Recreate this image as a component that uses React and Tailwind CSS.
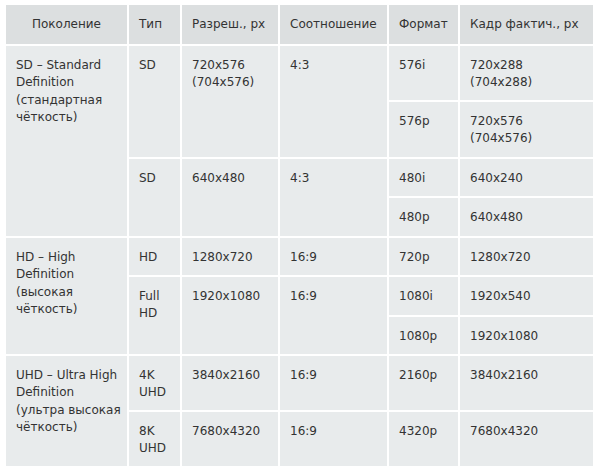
import React from 'react'

const head = 'bg-[#dcdfe0] px-[10px] py-0 h-[39px] align-middle font-normal'
const td = 'bg-[#e8ebec] px-[10px] pt-[11px] pb-[8px] align-top text-left'

function Lines({ children }) {
  return children.map((l, i) => (
    <React.Fragment key={i}>
      {i > 0 && <br />}
      {l}
    </React.Fragment>
  ))
}

export default function App() {
  return (
    <div className="w-[600px] h-[475px] bg-white pl-[4px] pt-[3px] overflow-hidden">
      <table
        className="border-separate border-spacing-[2px] table-fixed text-[12px] leading-[17.3px] text-[#333]"
        style={{ fontFamily: '"DejaVu Sans", Verdana, sans-serif', width: 591 }}
      >
        <colgroup>
          <col className="w-[121px]" />
          <col className="w-[51px]" />
          <col className="w-[96px]" />
          <col className="w-[107px]" />
          <col className="w-[69px]" />
          <col className="w-[133px]" />
        </colgroup>
        <thead>
          <tr className="h-[39px]">
            <th className={head + ' text-center'}>Поколение</th>
            <th className={head + ' text-left'}>Тип</th>
            <th className={head + ' text-left'}>Разреш., px</th>
            <th className={head + ' text-left'}>Соотношение</th>
            <th className={head + ' text-left'}>Формат</th>
            <th className={head + ' text-left'}>Кадр фактич., px</th>
          </tr>
        </thead>
        <tbody className="whitespace-nowrap">
          {/* SD */}
          <tr className="h-[54px]">
            <td rowSpan={4} className={td}>
              <Lines>{['SD – Standard', 'Definition', '(стандартная', 'чёткость)']}</Lines>
            </td>
            <td rowSpan={2} className={td}>SD</td>
            <td rowSpan={2} className={td}>
              <Lines>{['720x576', '(704x576)']}</Lines>
            </td>
            <td rowSpan={2} className={td}>4:3</td>
            <td className={td}>576i</td>
            <td className={td}>
              <Lines>{['720x288', '(704x288)']}</Lines>
            </td>
          </tr>
          <tr className="h-[55px]">
            <td className={td}>576p</td>
            <td className={td}>
              <Lines>{['720x576', '(704x576)']}</Lines>
            </td>
          </tr>
          <tr className="h-[37px]">
            <td rowSpan={2} className={td}>SD</td>
            <td rowSpan={2} className={td}>640x480</td>
            <td rowSpan={2} className={td}>4:3</td>
            <td className={td}>480i</td>
            <td className={td}>640x240</td>
          </tr>
          <tr className="h-[38px]">
            <td className={td}>480p</td>
            <td className={td}>640x480</td>
          </tr>

          {/* HD */}
          <tr className="h-[37px]">
            <td rowSpan={3} className={td}>
              <Lines>{['HD – High', 'Definition', '(высокая', 'чёткость)']}</Lines>
            </td>
            <td className={td}>HD</td>
            <td className={td}>1280x720</td>
            <td className={td}>16:9</td>
            <td className={td}>720p</td>
            <td className={td}>1280x720</td>
          </tr>
          <tr className="h-[38px]">
            <td rowSpan={2} className={td}>
              <Lines>{['Full', 'HD']}</Lines>
            </td>
            <td rowSpan={2} className={td}>1920x1080</td>
            <td rowSpan={2} className={td}>16:9</td>
            <td className={td}>1080i</td>
            <td className={td}>1920x540</td>
          </tr>
          <tr className="h-[37px]">
            <td className={td}>1080p</td>
            <td className={td}>1920x1080</td>
          </tr>

          {/* UHD */}
          <tr className="h-[54px]">
            <td rowSpan={2} className={td}>
              <Lines>{['UHD – Ultra High', 'Definition', '(ультра высокая', 'чёткость)']}</Lines>
            </td>
            <td className={td}>
              <Lines>{['4K', 'UHD']}</Lines>
            </td>
            <td className={td}>3840x2160</td>
            <td className={td}>16:9</td>
            <td className={td}>2160p</td>
            <td className={td}>3840x2160</td>
          </tr>
          <tr className="h-[54px]">
            <td className={td}>
              <Lines>{['8K', 'UHD']}</Lines>
            </td>
            <td className={td}>7680x4320</td>
            <td className={td}>16:9</td>
            <td className={td}>4320p</td>
            <td className={td}>7680x4320</td>
          </tr>
        </tbody>
      </table>
    </div>
  )
}
